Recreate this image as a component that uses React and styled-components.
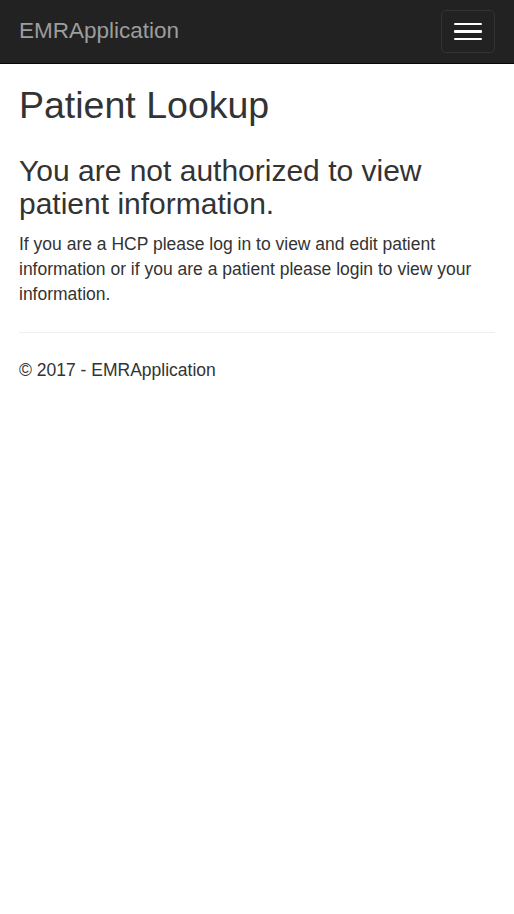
import React from "react";
import styled, { createGlobalStyle } from "styled-components";

const GlobalStyle = createGlobalStyle`
  html, body {
    margin: 0;
    padding: 0;
    background: #fff;
  }
  body {
    font-family: "Liberation Sans", Arial, Helvetica, sans-serif;
    font-size: 17.5px;
    line-height: 25px;
    color: #333;
  }
`;

const Navbar = styled.nav`
  height: 63px;
  background-color: #222;
  border-bottom: 1px solid #080808;
  display: flex;
  align-items: center;
  justify-content: space-between;
  padding: 0 19px;
`;

const Brand = styled.a`
  color: #9d9d9d;
  font-size: 22.5px;
  line-height: 28px;
  text-decoration: none;
  margin-top: -1px;
`;

const Toggle = styled.button`
  width: 54px;
  height: 43px;
  border: 1px solid #333;
  border-radius: 5px;
  background: transparent;
  display: flex;
  flex-direction: column;
  align-items: center;
  justify-content: center;
  gap: 5px;
  padding: 0;
  cursor: pointer;
`;

const IconBar = styled.span`
  display: block;
  width: 28px;
  height: 2.5px;
  background-color: #fff;
  border-radius: 1px;
`;

const Container = styled.main`
  padding: 0 19px;
`;

const Title = styled.h1`
  font-size: 37.5px;
  line-height: 41px;
  font-weight: 400;
  margin: 21px 0 0;
`;

const Notice = styled.h2`
  font-size: 30px;
  line-height: 33px;
  font-weight: 400;
  margin: 27.5px 0 0;
`;

const Message = styled.p`
  margin: 12.5px 0 0;
`;

const Divider = styled.hr`
  border: 0;
  border-top: 1px solid #eee;
  margin: 25px 0 0;
`;

const Footer = styled.footer`
  margin-top: 25px;

  & > p {
    margin: 0;
  }
`;

export default function App() {
  return (
    <>
      <GlobalStyle />
      <Navbar>
        <Brand href="#">EMRApplication</Brand>
        <Toggle aria-label="Toggle navigation">
          <IconBar />
          <IconBar />
          <IconBar />
        </Toggle>
      </Navbar>
      <Container>
        <Title>Patient Lookup</Title>
        <Notice>You are not authorized to view patient information.</Notice>
        <Message>
          If you are a HCP please log in to view and edit patient information or
          if you are a patient please login to view your information.
        </Message>
        <Divider />
        <Footer>
          <p>© 2017 - EMRApplication</p>
        </Footer>
      </Container>
    </>
  );
}
